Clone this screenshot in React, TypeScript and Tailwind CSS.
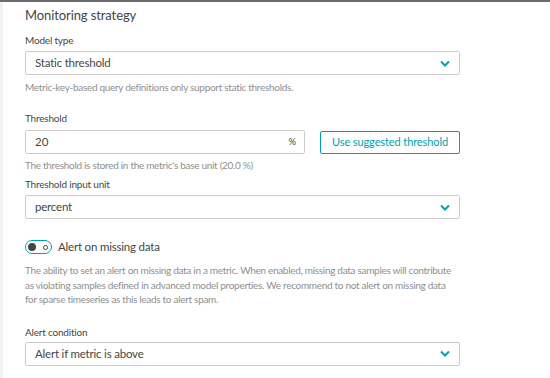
import React from "react";

function Chevron() {
  return (
    <svg width="10" height="7" viewBox="0 0 10 7" className="shrink-0">
      <path d="M1 1.5 L5 5.5 L9 1.5" fill="none" stroke="#00a1b2" strokeWidth="2" />
    </svg>
  );
}

function Select({ value }: { value: string }) {
  return (
    <div className="flex h-[24px] w-[435px] items-center justify-between rounded-[2px] border border-[#cccccc] bg-white pl-[9px] pr-[9px] text-[11.5px] tracking-[-0.2px] text-[#454646]">
      <span>{value}</span>
      <Chevron />
    </div>
  );
}

function Label({ children }: { children: React.ReactNode }) {
  return <div className="text-[10px] leading-[14px] tracking-[-0.2px] text-[#454646]">{children}</div>;
}

export default function App() {
  const [missing, setMissing] = React.useState(false);

  return (
    <div className="flex h-[378px] w-[550px] flex-col overflow-hidden bg-white font-['Lato',sans-serif]">
      <div className="h-[2px] w-full bg-[#6d6d6d]" />
      <div className="flex flex-1">
        <div className="w-[3px] bg-[#f2f2f2]" />
        <div className="flex flex-col pl-[22px] pt-[4px]">
          <h2 className="text-[13px] leading-[18px] tracking-[-0.1px] text-[#454646]">Monitoring strategy</h2>

          <div className="mt-[9px]">
            <Label>Model type</Label>
            <div className="mt-[4px]">
              <Select value="Static threshold" />
            </div>
            <p className="mt-[5px] text-[10px] leading-[14px] tracking-[-0.3px] text-[#8f8f8f]">
              Metric-key-based query definitions only support static thresholds.
            </p>
          </div>

          <div className="mt-[17px]">
            <Label>Threshold</Label>
            <div className="mt-[5px] flex items-center">
              <div className="flex h-[24px] w-[280px] items-center justify-between rounded-[2px] border border-[#cccccc] pl-[9px] pr-[8px] text-[11.5px] text-[#454646]">
                <span>20</span>
                <span className="text-[9.5px]">%</span>
              </div>
              <button className="ml-[15px] h-[23px] w-[140px] whitespace-nowrap rounded-[2px] border border-[#00a1b2] text-[11px] tracking-[-0.1px] text-[#00a1b2]">
                Use suggested threshold
              </button>
            </div>
            <p className="mt-[4px] text-[10px] leading-[14px] tracking-[-0.3px] text-[#8f8f8f]">
              The threshold is stored in the metric's base unit (20.0 %)
            </p>
          </div>

          <div className="mt-[5px]">
            <Label>Threshold input unit</Label>
            <div className="mt-[4px]">
              <Select value="percent" />
            </div>
          </div>

          <div className="mt-[21px] flex h-[14px] items-center">
            <button
              onClick={() => setMissing(!missing)}
              className="flex h-[14px] w-[27px] items-center justify-between rounded-full border-[1.5px] border-[#00a1b2] px-[2px]"
            >
              <span className="h-[8px] w-[8px] rounded-full bg-[#454646]" />
              <span className="mr-[1px] h-[5px] w-[5px] rounded-full border border-[#454646]" />
            </button>
            <span className="ml-[6px] text-[11.5px] tracking-[-0.2px] text-[#454646]">Alert on missing data</span>
          </div>
          <p className="mt-[9px] text-[10px] leading-[14.5px] tracking-[-0.3px] text-[#8f8f8f]">
            <span className="block whitespace-nowrap">
              The ability to set an alert on missing data in a metric. When enabled, missing data samples will contribute
            </span>
            <span className="block whitespace-nowrap">
              as violating samples defined in advanced model properties. We recommend to not alert on missing data
            </span>
            <span className="block whitespace-nowrap">for sparse timeseries as this leads to alert spam.</span>
          </p>

          <div className="mt-[18px]">
            <Label>Alert condition</Label>
            <div className="mt-[3px]">
              <Select value="Alert if metric is above" />
            </div>
          </div>
        </div>
      </div>
    </div>
  );
}
